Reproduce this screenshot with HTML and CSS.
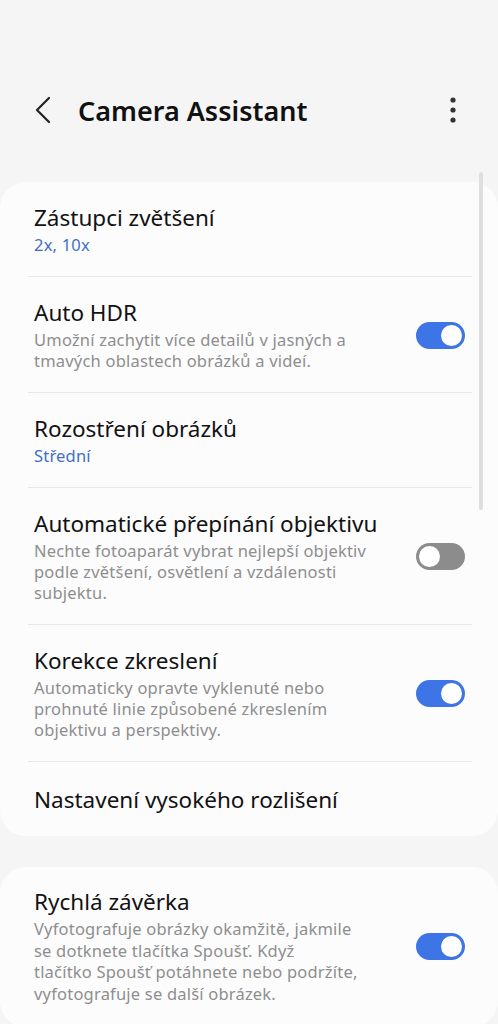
FILE: index.html
```html
<!DOCTYPE html>
<html lang="cs">
<head>
<meta charset="utf-8">
<title>Camera Assistant</title>
<link rel="stylesheet" href="styles.css">
</head>
<body>
<div class="screen">
  <header class="appbar">
    <button class="icon-btn back" aria-label="Zpět">
      <svg width="18" height="28" viewBox="0 0 18 28"><path d="M15 2 L3 14 L15 26" fill="none" stroke="#222" stroke-width="2.2" stroke-linecap="round" stroke-linejoin="round"/></svg>
    </button>
    <h1 class="title">Camera Assistant</h1>
    <button class="icon-btn more" aria-label="Další">
      <svg width="8" height="28" viewBox="0 0 8 28"><circle cx="4" cy="4" r="2.6" fill="#333"/><circle cx="4" cy="14" r="2.6" fill="#333"/><circle cx="4" cy="24" r="2.6" fill="#333"/></svg>
    </button>
  </header>

  <section class="card">
    <div class="item">
      <div class="text">
        <div class="label">Zástupci zvětšení</div>
        <div class="value">2x, 10x</div>
      </div>
    </div>
    <div class="item">
      <div class="text">
        <div class="label">Auto HDR</div>
        <div class="desc">Umožní zachytit více detailů v jasných a tmavých oblastech obrázků a videí.</div>
      </div>
      <span class="switch on"></span>
    </div>
    <div class="item">
      <div class="text">
        <div class="label">Rozostření obrázků</div>
        <div class="value">Střední</div>
      </div>
    </div>
    <div class="item">
      <div class="text">
        <div class="label">Automatické přepínání objektivu</div>
        <div class="desc">Nechte fotoaparát vybrat nejlepší objektiv podle zvětšení, osvětlení a vzdálenosti subjektu.</div>
      </div>
      <span class="switch off"></span>
    </div>
    <div class="item">
      <div class="text">
        <div class="label">Korekce zkreslení</div>
        <div class="desc">Automaticky opravte vyklenuté nebo prohnuté linie způsobené zkreslením objektivu a perspektivy.</div>
      </div>
      <span class="switch on"></span>
    </div>
    <div class="item single">
      <div class="text">
        <div class="label">Nastavení vysokého rozlišení</div>
      </div>
    </div>
  </section>

  <section class="card">
    <div class="item last">
      <div class="text">
        <div class="label">Rychlá závěrka</div>
        <div class="desc">Vyfotografuje obrázky okamžitě, jakmile<br>se dotknete tlačítka Spoušť. Když<br>tlačítko Spoušť potáhnete nebo podržíte, vyfotografuje se další obrázek.</div>
      </div>
      <span class="switch on"></span>
    </div>
  </section>

  <div class="scrollbar"></div>
</div>
</body>
</html>
```

FILE: styles.css
```css
* { box-sizing: border-box; }
html, body {
  margin: 0;
  padding: 0;
  background: #f5f5f5;
}
body {
  font-family: "Noto Sans", "Open Sans", sans-serif;
  color: #111;
  width: 498px;
  height: 1024px;
  overflow: hidden;
}
.screen {
  position: relative;
  padding-top: 82px;
}
.appbar {
  display: flex;
  align-items: center;
  height: 56px;
  padding: 0 0 0 26px;
}
.icon-btn {
  border: 0;
  background: none;
  padding: 0;
  display: flex;
  align-items: center;
  justify-content: center;
}
.back {
  width: 34px;
  height: 40px;
}
.title {
  margin: 0 0 0 18px;
  font-size: 27px;
  font-weight: 600;
  letter-spacing: 0;
  flex: 1;
  color: #111;
}
.more {
  width: 20px;
  height: 40px;
  margin-right: 35px;
}
.card {
  background: #fcfcfd;
  border-radius: 26px;
  margin-top: 44px;
  padding: 0;
}
.card + .card {
  margin-top: 31px;
}
.item {
  display: flex;
  align-items: center;
  margin: 0 26px 0 28px;
  padding: 22px 7px 21px 6px;
}
.item + .item {
  border-top: 1px solid #e7e7e9;
}
.item.single {
  min-height: 75px;
  padding-top: 24px;
  padding-bottom: 22px;
}
.item.last {
  padding-top: 21px;
  border-bottom: 1px solid #e7e7e9;
}
.text {
  flex: 1;
  min-width: 0;
}
.label {
  font-size: 22.5px;
  line-height: 28px;
  color: #121212;
  white-space: nowrap;
}
.value {
  font-size: 16.5px;
  line-height: 21px;
  margin-top: 2px;
  color: #3f6fc6;
  letter-spacing: 0.2px;
}
.desc {
  font-size: 16.5px;
  line-height: 21px;
  margin-top: 2px;
  color: #8e8e8e;
  letter-spacing: 0.2px;
  max-width: 338px;
}
.item.last .desc {
  line-height: 21.7px;
}
.switch {
  margin-left: auto;
  width: 49px;
  height: 27px;
  border-radius: 14px;
  position: relative;
  flex: none;
}
.switch::after {
  content: "";
  position: absolute;
  top: 3px;
  width: 21px;
  height: 21px;
  border-radius: 50%;
  background: #fff;
}
.switch.on { background: #3d75e6; }
.switch.on::after { right: 3px; }
.switch.off { background: #8c8c8c; }
.switch.off::after { left: 3px; }
.scrollbar {
  position: absolute;
  left: 479px;
  top: 172px;
  width: 4px;
  height: 338px;
  border-radius: 2px;
  background: #dedede;
}
```
